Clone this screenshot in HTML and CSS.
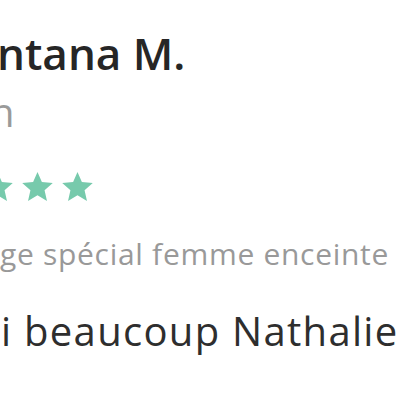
FILE: index.html
```html
<!DOCTYPE html>
<html lang="fr">
<head>
    <meta charset="UTF-8" />
    <meta name="viewport" content="width=device-width, initial-scale=1.0"/>
    <title>Avis client</title>
    <link rel="stylesheet" href="styles.css">
</head>
<body>

<!-- Review card (cropped view) -->
<section class="review">
    <h2 class="review-name">ntana M.</h2>
    <p class="review-place">n</p>
    <div class="review-stars">
        <svg class="star" viewBox="1.2 1.5 21.6 20.5"><polygon points="12,1.5 15.1,8.6 22.8,9.3 17,14.4 18.7,22 12,18 5.3,22 7,14.4 1.2,9.3 8.9,8.6"/></svg>
        <svg class="star" viewBox="1.2 1.5 21.6 20.5"><polygon points="12,1.5 15.1,8.6 22.8,9.3 17,14.4 18.7,22 12,18 5.3,22 7,14.4 1.2,9.3 8.9,8.6"/></svg>
        <svg class="star" viewBox="1.2 1.5 21.6 20.5"><polygon points="12,1.5 15.1,8.6 22.8,9.3 17,14.4 18.7,22 12,18 5.3,22 7,14.4 1.2,9.3 8.9,8.6"/></svg>
    </div>
    <p class="review-service">ge spécial femme enceinte</p>
    <p class="review-text">i beaucoup Nathalie</p>
</section>

</body>
</html>
```

FILE: styles.css
```css
body {
    font-family: 'Open Sans', 'DejaVu Sans', sans-serif;
    background: #fff;
    margin: 0;
    padding: 0;
    overflow: hidden;
}

.review {
    padding-top: 27px;
    white-space: nowrap;
}

.review p,
.review h2 {
    margin: 0;
    line-height: 1.2;
}

.review-name {
    font-size: 44px;
    font-weight: 600;
    color: #262626;
    margin-left: -3px !important;
}

.review-place {
    font-size: 40px;
    color: #9a9a9a;
    margin-top: 8px !important;
    margin-left: -10px !important;
}

.review-stars {
    display: flex;
    gap: 9px;
    margin-top: 36px;
    margin-left: -18px;
    height: 30px;
}

.star {
    width: 31px;
    height: 29px;
    fill: #77caac;
}

.review-service {
    font-size: 30px;
    letter-spacing: 0.7px;
    color: #999;
    margin-top: 34px !important;
}

.review-text {
    font-size: 40px;
    letter-spacing: 1.3px;
    color: #2e2e2e;
    margin-top: 35px !important;
    margin-left: 1px !important;
}
```
